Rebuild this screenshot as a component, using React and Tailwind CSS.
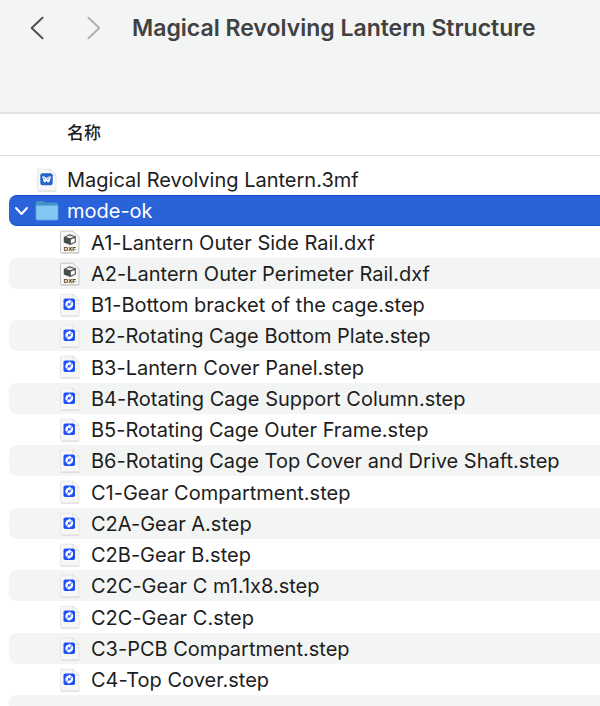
import React from "react";

const files = [
  { name: "Magical Revolving Lantern.3mf", kind: "3mf" },
  { name: "mode-ok", kind: "folder" },
  { name: "A1-Lantern Outer Side Rail.dxf", kind: "dxf" },
  { name: "A2-Lantern Outer Perimeter Rail.dxf", kind: "dxf" },
  { name: "B1-Bottom bracket of the cage.step", kind: "step" },
  { name: "B2-Rotating Cage Bottom Plate.step", kind: "step" },
  { name: "B3-Lantern Cover Panel.step", kind: "step" },
  { name: "B4-Rotating Cage Support Column.step", kind: "step" },
  { name: "B5-Rotating Cage Outer Frame.step", kind: "step" },
  { name: "B6-Rotating Cage Top Cover and Drive Shaft.step", kind: "step" },
  { name: "C1-Gear Compartment.step", kind: "step" },
  { name: "C2A-Gear A.step", kind: "step" },
  { name: "C2B-Gear B.step", kind: "step" },
  { name: "C2C-Gear C m1.1x8.step", kind: "step" },
  { name: "C2C-Gear C.step", kind: "step" },
  { name: "C3-PCB Compartment.step", kind: "step" },
  { name: "C4-Top Cover.step", kind: "step" },
];

function Page({ children, outline = "#e2e2e2" }) {
  return (
    <svg viewBox="0 0 24 24" className="size-6 shrink-0" aria-hidden="true">
      <path d="M3 23h18.2" stroke="#c9c9c9" strokeWidth="1" />
      <path d="M2.5 2.2q0-1 1-1H15l6 6v14.5q0 1-1 1H3.5q-1 0-1-1z" fill="#f7f7f7" stroke={outline} strokeWidth=".8" />
      {children}
    </svg>
  );
}

function Fold() {
  return <path d="M15 1.2v5q0 1 1 1h5z" fill="#fff" stroke="#d2d2d2" strokeWidth=".7" />;
}

function FileIcon({ kind }) {
  if (kind === "folder") {
    return (
      <svg viewBox="0 0 24 24" className="size-6 shrink-0" aria-hidden="true">
        <path d="M.8 4q0-2 2-2h5q1 0 1.7.8l.8.8h11q1.900 0 1.900 2v3H.8z" fill="#4594c8" />
        <path d="M.8 6h22.4v13.5q0 1.700-1.700 1.700h-19Q.8 21.200.8 19.500z" fill="#83c8f3" />
        <path d="M1 6.500h22" stroke="#5daadd" strokeWidth="1" />
        <path d="M1.2 7v12.500q0 1.300 1.300 1.300h19q1.300 0 1.300-1.300V7" fill="none" stroke="#559bd1" strokeWidth=".8" strokeDasharray="1.200 .8" />
      </svg>
    );
  }
  if (kind === "dxf") {
    return (
      <Page outline="#b9b9b9">
        <path d="m5.800 7 5.700-2.700 6.300 2v6.200l-5.600 2.500-6.400-2.500z" fill="#4a4a4a" />
        <path d="m7.600 7 4-1.500 4.600 1.300-4.100 1.500z" fill="#f4f4f4" />
        <path d="m12.800 9.500 3.900-1.500v3.900l-3.900 1.700z" fill="#fafafa" />
        <text x="11.800" y="20.800" textAnchor="middle" fontFamily="Liberation Sans Narrow, Liberation Sans, sans-serif" fontSize="6" fontWeight="700" fill="#333">DXF</text>
      </Page>
    );
  }
  if (kind === "3mf") {
    return (
      <Page>
        <Fold />
        <rect x="5.300" y="5.300" width="12.400" height="11.900" rx="2.200" fill="#2563c9" />
        <path d="m7.100 8.300 3 .5 1.500 1.600L13 8.700l3.200-.3-.9 2.600-1.100 3.200-1.300.3-1.400-1.500-1.500 1.500-1.300-.4-.7-3z" fill="#fff" />
        <path d="m8.600 10 2 1.400m3.700-1.700-2.200 2" stroke="#2563c9" strokeWidth=".8" />
      </Page>
    );
  }
  return (
    <Page>
      <Fold />
      <rect x="5.500" y="5.500" width="11.500" height="11.500" rx="1.800" fill="#2050f5" />
      <path d="M8 13.700C6.500 11 7.800 8 10.800 7.500L11.200 6.400l3.400 2.300-3.400 2.200-.2-1.200c-1 .3-1.500 1.400-.9 2.600z" fill="#fff" />
      <path d="M14.500 8.800c1.500 2.700.2 5.700-2.800 6.200l-.4 1.100-3.400-2.300 3.400-2.200.2 1.200c1-.3 1.500-1.400.9-2.600z" fill="#fff" />
      <path d="m8.300 14.200 5.900-5.900" stroke="#2050f5" strokeWidth=".8" />
    </Page>
  );
}

function Row({ file, index }) {
  const folder = file.kind === "folder";
  const inside = index > 1;
  const tone = folder
    ? "bg-[#2962d9] text-white border-y border-[#1450cf]"
    : index % 2
      ? "bg-[#f3f5f4] text-[#1d1d1d]"
      : "text-[#1d1d1d]";
  const height = index % 4 === 2 ? "h-8" : "h-[31px]";
  return (
    <tr>
      <td className="p-0 pl-[9px]">
        <div className={`flex items-center rounded-l-lg ${tone} ${height} ${inside ? "pl-[49px]" : ""}`}>
          {!inside && (
            <span className="flex w-[26px] shrink-0 items-center">
              {folder && (
                <button type="button" aria-label="mode-ok" aria-expanded="true" className="flex size-6 items-center justify-center">
                  <svg viewBox="0 0 14 10" className="h-[10px] w-[14px]" fill="none" aria-hidden="true">
                    <path d="m2 2 5.500 6L13 2" stroke="white" strokeWidth="2" strokeLinecap="round" strokeLinejoin="round" />
                  </svg>
                </button>
              )}
            </span>
          )}
          <FileIcon kind={file.kind} />
          <span className={`whitespace-nowrap pt-px text-[20px] leading-[30px] ${inside ? "pl-[9px]" : "pl-2"}`}>{file.name}</span>
        </div>
      </td>
    </tr>
  );
}

export default function App() {
  return (
    <main className="flex h-screen flex-col overflow-hidden bg-white font-['Inter','Noto_Sans_CJK_SC',sans-serif] [font-variant-ligatures:no-contextual]">
      <header className="flex h-[114px] shrink-0 items-start border-b-2 border-[#e1e2e2] bg-[#f3f5f4] pt-3 pl-[22px]">
        <nav className="flex gap-[26px]">
          <button type="button" aria-label="Back" className="flex h-8 w-[30px] items-center justify-center text-[#505050]">
            <svg viewBox="0 0 14 24" className="h-6 w-[14px]" fill="none" aria-hidden="true">
              <path d="M12.500 1.700 1.700 12l10.800 10.300" stroke="currentColor" strokeWidth="2" strokeLinecap="round" strokeLinejoin="round" />
            </svg>
          </button>
          <button type="button" aria-label="Forward" className="flex h-8 w-[30px] items-center justify-center text-[#b0b1b1]">
            <svg viewBox="0 0 14 24" className="h-6 w-[14px]" fill="none" aria-hidden="true">
              <path d="m2.500 1.700 10.800 10.300L2.500 22.300" stroke="currentColor" strokeWidth="2" strokeLinecap="round" strokeLinejoin="round" />
            </svg>
          </button>
        </nav>
        <h1 className="pl-6 text-[23px] leading-8 font-semibold whitespace-nowrap text-[#414141]">Magical Revolving Lantern Structure</h1>
      </header>
      <table className="w-full border-separate border-spacing-0">
        <thead>
          <tr>
            <th scope="col" className="h-[42px] border-b border-[#dfdfdf] p-0 pb-1 pl-[67px] text-left align-middle text-[17px] leading-6 font-medium text-[#1d1d1d]">名称</th>
          </tr>
        </thead>
        <tbody className="before:block before:h-2">
          {files.map((file, index) => (
            <Row key={file.name} file={file} index={index} />
          ))}
        </tbody>
      </table>
      <div className="ml-[9px] min-h-0 flex-1 rounded-tl-lg bg-[#f3f5f4]" />
    </main>
  );
}
